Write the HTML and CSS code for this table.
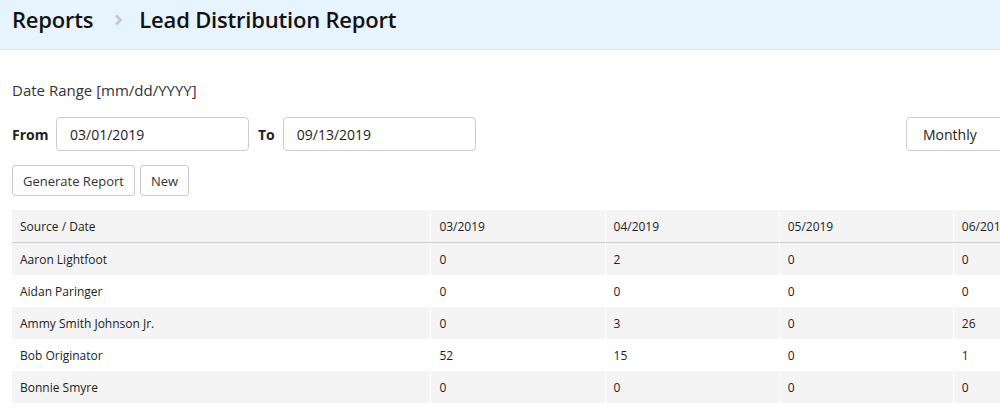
FILE: index.html
```html
<!DOCTYPE html>
<html>
<head>
<meta charset="utf-8">
<link rel="stylesheet" href="styles.css">
</head>
<body>
<header class="topbar">
  <h1 class="crumbs">
    <span class="crumb">Reports</span>
    <svg class="chev" width="9" height="12" viewBox="0 0 9 12"><path d="M2 1.5 L6.5 6 L2 10.5" fill="none" stroke="#c4c7ca" stroke-width="2.6"/></svg>
    <span class="crumb">Lead Distribution Report</span>
  </h1>
</header>
<main class="content">
  <div class="range-label">Date Range [mm/dd/YYYY]</div>
  <div class="filter-row">
    <div class="dates">
      <label class="lbl">From</label>
      <div class="input">03/01/2019</div>
      <label class="lbl lbl-to">To</label>
      <div class="input">09/13/2019</div>
    </div>
    <div class="select">Monthly</div>
  </div>
  <div class="actions">
    <button class="btn">Generate Report</button>
    <button class="btn">New</button>
  </div>
  <table class="report">
    <thead>
      <tr><th class="c-src">Source / Date</th><th>03/2019</th><th>04/2019</th><th>05/2019</th><th>06/2019</th></tr>
    </thead>
    <tbody>
      <tr><td>Aaron Lightfoot</td><td>0</td><td>2</td><td>0</td><td>0</td></tr>
      <tr><td>Aidan Paringer</td><td>0</td><td>0</td><td>0</td><td>0</td></tr>
      <tr><td>Ammy Smith Johnson Jr.</td><td>0</td><td>3</td><td>0</td><td>26</td></tr>
      <tr><td>Bob Originator</td><td>52</td><td>15</td><td>0</td><td>1</td></tr>
      <tr><td>Bonnie Smyre</td><td>0</td><td>0</td><td>0</td><td>0</td></tr>
    </tbody>
  </table>
</main>
</body>
</html>
```
FILE: styles.css
```css
html, body {
  margin: 0;
  padding: 0;
  overflow: hidden;
  background: #fff;
}
body {
  font-family: "Open Sans", Lato, sans-serif;
  color: #222;
  width: 1100px;
}
.topbar {
  box-sizing: border-box;
  background: #e8f4fd;
  border-bottom: 1px solid #dde2e6;
  height: 50px;
  display: flex;
  align-items: flex-start;
  padding: 4px 12px 0;
}
.crumbs {
  margin: 0;
  font-size: 22px;
  line-height: 30px;
  font-weight: 600;
  color: #111;
  display: flex;
  align-items: center;
  letter-spacing: -0.2px;
}
.chev {
  margin: 1px 16px 0 21px;
}
.content {
  padding: 0 12px;
}
.range-label {
  margin-top: 30px;
  font-size: 15px;
  color: #333;
  height: 21px;
  line-height: 21px;
}
.filter-row {
  margin-top: 16px;
  display: flex;
  align-items: center;
  justify-content: space-between;
  width: 1060px;
}
.dates {
  display: flex;
  align-items: center;
}
.lbl {
  font-size: 14px;
  font-weight: 700;
  color: #222;
  width: 44px;
}
.lbl-to {
  width: auto;
  margin: 0 8px 0 9px;
}
.input, .select {
  box-sizing: border-box;
  height: 34px;
  border: 1px solid #ccc;
  border-radius: 4px;
  font-size: 14px;
  color: #222;
  display: flex;
  align-items: center;
  padding: 0 13px;
}
.input {
  width: 193px;
}
.select {
  width: 166px;
  padding-left: 16px;
}
.actions {
  margin-top: 14px;
  display: flex;
  gap: 5px;
}
.btn {
  box-sizing: border-box;
  height: 31px;
  border: 1px solid #ccc;
  border-radius: 3px;
  background: #fff;
  font-family: inherit;
  font-size: 13px;
  color: #333;
  padding: 0 10px;
}
.report {
  margin-top: 14px;
  border-collapse: collapse;
  table-layout: fixed;
  width: 1115px;
  font-size: 12px;
  color: #222;
}
.report th, .report td {
  height: 32px;
  padding: 0 8px;
  text-align: left;
  font-weight: 400;
  border-left: 1px solid #fff;
  width: 157px;
}
.report th.c-src {
  width: 402px;
}
.report th:first-child, .report td:first-child {
  border-left: none;
}
.report thead th {
  background: #f4f4f4;
  border-bottom: 1px solid #cfcfcf;
}
.report tbody tr:nth-child(odd) td {
  background: #f4f4f4;
}
```
